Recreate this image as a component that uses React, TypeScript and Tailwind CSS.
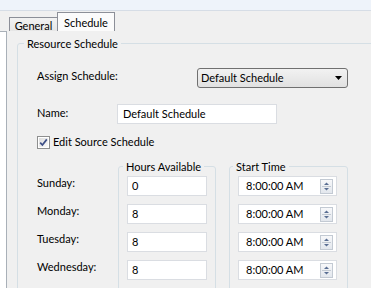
import type { ReactNode } from "react";

const DAYS = [
  { day: "Sunday:", hours: "0", start: "8:00:00 AM" },
  { day: "Monday:", hours: "8", start: "8:00:00 AM" },
  { day: "Tuesday:", hours: "8", start: "8:00:00 AM" },
  { day: "Wednesday:", hours: "8", start: "8:00:00 AM" },
];

function Spinner() {
  return (
    <div className="w-[13px] h-[15px] border border-[#c3cad3] bg-gradient-to-b from-[#f7f8fa] to-[#e3e7ed] flex flex-col">
      <svg width="11" height="13" viewBox="0 0 11 13">
        <path d="M3 5 L5.5 2.5 L8 5 Z" fill="#5a6f93" />
        <line x1="1" y1="6.5" x2="10" y2="6.5" stroke="#c3cad3" />
        <path d="M3 8 L5.5 10.5 L8 8 Z" fill="#5a6f93" />
      </svg>
    </div>
  );
}

function Box({ className, children }: { className: string; children: ReactNode }) {
  return (
    <div className={`h-[20px] bg-white border border-[#dadde2] flex items-center ${className}`}>
      {children}
    </div>
  );
}

export default function App() {
  return (
    <div className="w-[371px] h-[288px] overflow-hidden bg-[#f0f0f0] text-[11px] text-black font-['Lato',sans-serif] whitespace-nowrap flex flex-col">
      <div className="h-[11px] shrink-0 bg-[#eef3fa] border-b border-[#d6dde6]" />

      {/* tab strip */}
      <div className="h-[20px] shrink-0 flex items-end pl-[9px]">
        <div className="h-[14px] w-[49px] border border-b-0 border-[#8c8f98] bg-gradient-to-b from-[#f2f2f2] to-[#e6e6e6] flex items-center justify-center leading-none pt-px">
          General
        </div>
        <div className="h-[19px] w-[58px] -ml-px border border-b-0 border-[#8c8f98] bg-[#fbfbfb] flex items-center justify-center leading-none">
          Schedule
        </div>
      </div>

      <div className="flex flex-1 min-h-0">
        <div className="w-[7px] shrink-0 bg-white border-r border-t border-[#a9b0b8]" />

        <div className="flex-1 pl-[10px]">
          <fieldset className="mt-[5px] w-[380px] h-[300px] border border-[#d5dfe5] rounded-[3px] px-[6px]">
            <legend className="px-[3px] leading-[15px]">Resource Schedule</legend>

            <div className="pl-[13px]">
              <div className="mt-[17px] h-[20px] flex items-center">
                <span className="w-[160px] -mt-[3px]">Assign Schedule:</span>
                <div className="w-[151px] h-[20px] rounded-[3px] border border-[#707070] bg-gradient-to-b from-[#f2f2f2] to-[#e1e1e1] flex items-center pl-[3px] pr-[5px]">
                  <span className="flex-1">Default Schedule</span>
                  <svg width="7" height="4" viewBox="0 0 7 4">
                    <path d="M0 0 H7 L3.5 4 Z" fill="#000" />
                  </svg>
                </div>
              </div>

              <div className="mt-[16px] h-[20px] flex items-center">
                <span className="w-[80px] -mt-px">Name:</span>
                <Box className="w-[160px] pl-[5px]">Default Schedule</Box>
              </div>

              <div className="mt-[10px] h-[16px] flex items-center gap-[3px]">
                <svg width="13" height="13" viewBox="0 0 13 13">
                  <defs>
                    <linearGradient id="cb" x1="0" y1="0" x2="1" y2="1">
                      <stop offset="0" stopColor="#dcdcdc" />
                      <stop offset="1" stopColor="#fbfbfb" />
                    </linearGradient>
                  </defs>
                  <rect x="0.5" y="0.5" width="12" height="12" fill="#fff" stroke="#8e8f8f" />
                  <rect x="2" y="2" width="9" height="9" fill="url(#cb)" />
                  <path d="M3.2 6.6 L5.4 9 L9.8 3.4" fill="none" stroke="#3d4f87" strokeWidth="1.7" />
                </svg>
                <span>Edit Source Schedule</span>
              </div>

              <div className="mt-[9px] flex">
                <div className="w-[81px] pt-[14px] flex flex-col gap-[8px]">
                  {DAYS.map((d) => (
                    <div key={d.day} className="h-[20px] flex items-center">
                      {d.day}
                    </div>
                  ))}
                </div>

                <fieldset className="w-[98px] h-[140px] border border-[#d5dfe5] rounded-[3px] pl-[4px]">
                  <legend className="px-[3px] leading-[15px]">Hours Available</legend>
                  <div className="mt-[2px] flex flex-col gap-[8px]">
                    {DAYS.map((d) => (
                      <Box key={d.day} className="ml-[4px] w-[80px] pl-[4px]">
                        {d.hours}
                      </Box>
                    ))}
                  </div>
                </fieldset>

                <fieldset className="ml-[13px] w-[119px] h-[140px] border border-[#d5dfe5] rounded-[3px] pl-[3px]">
                  <legend className="px-[3px] leading-[15px]">Start Time</legend>
                  <div className="mt-[2px] flex flex-col gap-[8px]">
                    {DAYS.map((d) => (
                      <Box key={d.day} className="ml-[5px] w-[99px] pl-[7px] pr-[3px]">
                        <span className="flex-1">{d.start}</span>
                        <Spinner />
                      </Box>
                    ))}
                  </div>
                </fieldset>
              </div>
            </div>
          </fieldset>
        </div>
      </div>
    </div>
  );
}
